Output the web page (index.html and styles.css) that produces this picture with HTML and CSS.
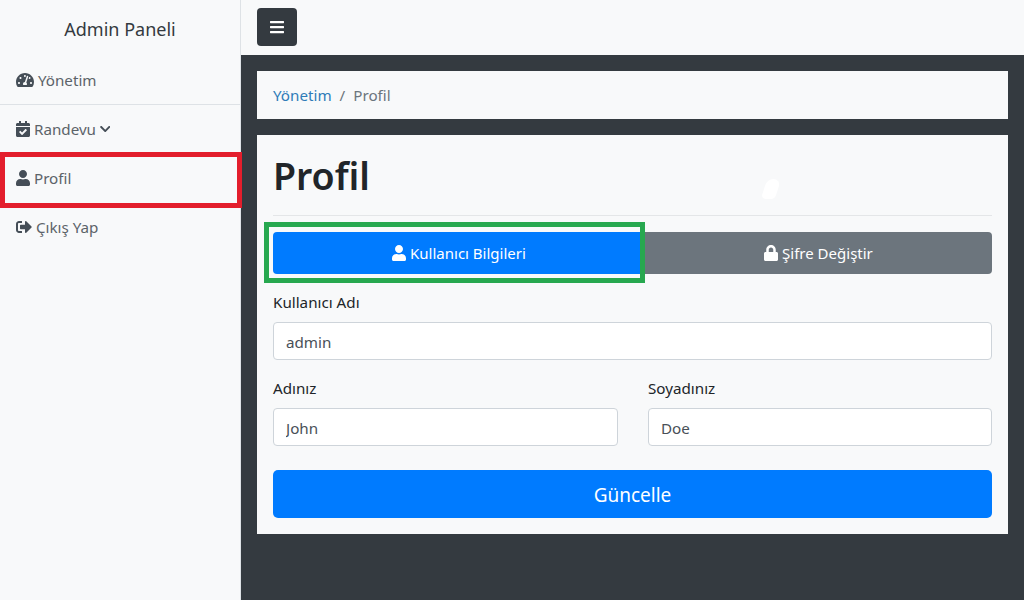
FILE: index.html
```html
<!DOCTYPE html>
<html lang="en">
<head>
    <meta charset="UTF-8">
    <meta name="viewport" content="width=device-width, initial-scale=1.0">
    <title>Admin Paneli</title>
    <link rel="stylesheet" href="styles.css">
</head>
<body>
    <div class="wrapper">
        <!-- Sidebar -->
        <nav class="sidebar">
            <div class="sidebar-header">Admin Paneli</div>
            <ul class="side-menu">
                <li class="side-item with-line">
                    <a href="#"><svg class="icon" viewBox="0 0 576 512"><path d="M288 32C128.94 32 0 160.94 0 320c0 52.8 14.25 102.26 39.06 144.8 5.61 9.62 16.3 15.2 27.44 15.2h443c11.14 0 21.83-5.58 27.44-15.2C561.75 422.26 576 372.8 576 320c0-159.06-128.94-288-288-288zm0 64c14.71 0 26.58 10.13 30.32 23.65-1.11 2.26-2.64 4.23-3.45 6.67l-9.22 27.67c-5.13 3.49-10.97 6.01-17.64 6.01-17.67 0-32-14.33-32-32S270.33 96 288 96zM96 384c-17.67 0-32-14.33-32-32s14.33-32 32-32 32 14.33 32 32-14.33 32-32 32zm48-160c-17.67 0-32-14.33-32-32s14.33-32 32-32 32 14.33 32 32-14.33 32-32 32zm246.77-72.41l-61.33 184C343.13 347.33 352 364.54 352 384c0 11.72-3.38 22.55-8.88 32H232.88c-5.5-9.45-8.88-20.28-8.88-32 0-33.94 26.5-61.43 59.9-63.59l61.34-184.01c4.17-12.56 17.73-19.45 30.36-15.17 12.57 4.19 19.35 17.79 15.17 30.36zm14.66 57.2l15.52-46.55c3.47-1.29 7.13-2.23 11.05-2.23 17.67 0 32 14.33 32 32s-14.33 32-32 32c-11.38-.01-20.89-6.28-26.57-15.22zM480 384c-17.67 0-32-14.33-32-32s14.33-32 32-32 32 14.33 32 32-14.33 32-32 32z"/></svg> Yönetim</a>
                </li>
                <li class="side-item">
                    <a href="#"><svg class="icon" viewBox="0 0 448 512"><path d="M436 160H12c-6.627 0-12-5.373-12-12v-36c0-26.51 21.49-48 48-48h48V12c0-6.627 5.373-12 12-12h40c6.627 0 12 5.373 12 12v52h128V12c0-6.627 5.373-12 12-12h40c6.627 0 12 5.373 12 12v52h48c26.51 0 48 21.49 48 48v36c0 6.627-5.373 12-12 12zM12 192h424c6.627 0 12 5.373 12 12v260c0 26.51-21.49 48-48 48H48c-26.51 0-48-21.49-48-48V204c0-6.627 5.373-12 12-12zm333.296 95.947l-28.169-28.398c-4.667-4.705-12.265-4.736-16.97-.068L194.12 364.665l-45.98-46.352c-4.667-4.705-12.266-4.736-16.971-.068l-28.397 28.17c-4.705 4.667-4.736 12.265-.068 16.97l82.601 83.269c4.667 4.705 12.265 4.736 16.97.068l142.953-141.805c4.705-4.667 4.736-12.265.068-16.97z"/></svg> Randevu <svg class="icon chevron" viewBox="0 0 448 512"><path d="M207.029 381.476L12.686 187.132c-9.373-9.373-9.373-24.569 0-33.941l22.667-22.667c9.357-9.357 24.522-9.375 33.901-.04L224 284.505l154.745-154.021c9.379-9.335 24.544-9.317 33.901.04l22.667 22.667c9.373 9.373 9.373 24.569 0 33.941L240.971 381.476c-9.373 9.372-24.569 9.372-33.942 0z"/></svg></a>
                </li>
                <li class="side-item">
                    <a href="#"><svg class="icon" viewBox="0 0 448 512"><path d="M224 256c70.7 0 128-57.3 128-128S294.7 0 224 0 96 57.3 96 128s57.3 128 128 128zm89.6 32h-16.7c-22.2 10.2-46.9 16-72.9 16s-50.6-5.8-72.9-16h-16.7C60.2 288 0 348.2 0 422.4V464c0 26.5 21.5 48 48 48h352c26.5 0 48-21.5 48-48v-41.6c0-74.2-60.2-134.4-134.4-134.4z"/></svg> Profil</a>
                </li>
                <li class="side-item">
                    <a href="#"><svg class="icon" viewBox="0 0 512 512"><path d="M497 273L329 441c-15 15-41 4.5-41-17v-96H152c-13.3 0-24-10.7-24-24v-96c0-13.3 10.7-24 24-24h136V88c0-21.4 25.9-32 41-17l168 168c9.3 9.4 9.3 24.6 0 34zM192 436v-40c0-6.6-5.4-12-12-12H96c-17.7 0-32-14.3-32-32V160c0-17.7 14.3-32 32-32h84c6.6 0 12-5.4 12-12V76c0-6.6-5.4-12-12-12H96c-53 0-96 43-96 96v192c0 53 43 96 96 96h84c6.6 0 12-5.4 12-12z"/></svg> Çıkış Yap</a>
                </li>
            </ul>
            <div class="mark-red"></div>
        </nav>

        <div class="content">
            <header class="topbar">
                <button class="toggle-btn"><svg class="icon" viewBox="0 0 448 512"><path d="M16 132h416c8.837 0 16-7.163 16-16V76c0-8.837-7.163-16-16-16H16C7.163 60 0 67.163 0 76v40c0 8.837 7.163 16 16 16zm0 160h416c8.837 0 16-7.163 16-16v-40c0-8.837-7.163-16-16-16H16c-8.837 0-16 7.163-16 16v40c0 8.837 7.163 16 16 16zm0 160h416c8.837 0 16-7.163 16-16v-40c0-8.837-7.163-16-16-16H16c-8.837 0-16 7.163-16 16v40c0 8.837 7.163 16 16 16z"/></svg></button>
            </header>

            <main class="main">
                <ol class="breadcrumb">
                    <li><a href="#">Yönetim</a></li>
                    <li class="sep">/</li>
                    <li class="current">Profil</li>
                </ol>

                <section class="card">
                    <h1>Profil</h1>
                    <div class="smudge"></div>
                    <hr>
                    <div class="tabs">
                        <button class="tab tab-user"><svg class="icon" viewBox="0 0 448 512"><path d="M224 256c70.7 0 128-57.3 128-128S294.7 0 224 0 96 57.3 96 128s57.3 128 128 128zm89.6 32h-16.7c-22.2 10.2-46.9 16-72.9 16s-50.6-5.8-72.9-16h-16.7C60.2 288 0 348.2 0 422.4V464c0 26.5 21.5 48 48 48h352c26.5 0 48-21.5 48-48v-41.6c0-74.2-60.2-134.4-134.4-134.4z"/></svg> Kullanıcı Bilgileri</button>
                        <button class="tab tab-pass"><svg class="icon" viewBox="0 0 448 512"><path d="M400 224h-24v-72C376 68.2 307.8 0 224 0S72 68.2 72 152v72H48c-26.5 0-48 21.5-48 48v192c0 26.5 21.5 48 48 48h352c26.5 0 48-21.5 48-48V272c0-26.5-21.5-48-48-48zm-104 0H152v-72c0-39.7 32.3-72 72-72s72 32.3 72 72v72z"/></svg> Şifre Değiştir</button>
                    </div>
                    <div class="mark-green"></div>

                    <form class="profile-form">
                        <div class="field">
                            <label>Kullanıcı Adı</label>
                            <input type="text" value="admin">
                        </div>
                        <div class="field-row">
                            <div class="field">
                                <label>Adınız</label>
                                <input type="text" value="John">
                            </div>
                            <div class="field">
                                <label>Soyadınız</label>
                                <input type="text" value="Doe">
                            </div>
                        </div>
                        <button type="button" class="save-btn">Güncelle</button>
                    </form>
                </section>
            </main>
        </div>
    </div>
</body>
</html>
```

FILE: styles.css
```css
* {
    margin: 0;
    padding: 0;
    box-sizing: border-box;
}

body {
    font-family: "Noto Sans", "Open Sans", sans-serif;
    font-size: 15.2px;
    background-color: #343a40;
    color: #212529;
    overflow: hidden;
}

a {
    text-decoration: none;
}

.icon {
    height: 16px;
    width: auto;
    fill: currentColor;
    vertical-align: -2px;
}

.wrapper {
    display: flex;
    height: 600px;
}

/* Sidebar */
.sidebar {
    position: relative;
    flex: 0 0 241px;
    background-color: #f8f9fa;
    border-right: 1px solid #dee2e6;
}

.sidebar-header {
    height: 56px;
    padding-top: 16px;
    font-size: 18px;
    line-height: 26px;
    text-align: center;
    color: #343a40;
}

.side-menu {
    list-style: none;
}

.side-item {
    height: 49px;
}

.side-item.with-line {
    border-bottom: 1px solid #dee2e6;
}

.side-item a {
    display: block;
    padding: 14px 16px 0;
    line-height: 20px;
    color: #5c6369;
}

.side-item .icon {
    color: #454e57;
}

.side-item .chevron {
    height: 12px;
    vertical-align: 0;
}

.mark-red {
    position: absolute;
    left: 0;
    top: 152px;
    width: 242px;
    height: 56px;
    border: 5px solid #e31e2c;
}

/* Top bar */
.content {
    flex: 1;
    display: flex;
    flex-direction: column;
}

.topbar {
    height: 55px;
    padding: 8px 16px;
    background-color: #f8f9fa;
}

.toggle-btn {
    display: flex;
    align-items: center;
    justify-content: center;
    width: 40px;
    height: 38px;
    border: none;
    border-radius: 4px;
    background-color: #343a40;
    color: #fff;
}

/* Main */
.main {
    flex: 1;
    padding: 16px;
    background-color: #343a40;
}

.breadcrumb {
    display: flex;
    gap: 8px;
    height: 48px;
    padding: 14px 16px;
    margin-bottom: 16px;
    list-style: none;
    line-height: 20px;
    background-color: #f8f9fa;
}

.breadcrumb a {
    color: #2f7cb8;
}

.breadcrumb .sep,
.breadcrumb .current {
    color: #6c757d;
}

.card {
    position: relative;
    height: 399px;
    padding: 16px;
    background-color: #f8f9fa;
}

.card h1 {
    height: 48px;
    font-size: 37.5px;
    font-weight: 600;
    line-height: 50px;
    color: #212529;
}

.smudge {
    position: absolute;
    left: 507px;
    top: 44px;
    width: 14px;
    height: 20px;
    border-radius: 6px 8px 4px 5px;
    background-color: #fff;
    transform: skewX(-18deg);
}

.card hr {
    margin: 16px 0;
    border: none;
    border-top: 1px solid #e4e6e8;
}

.tabs {
    display: flex;
    height: 42px;
}

.tab {
    font-family: inherit;
    font-size: 15px;
    border: none;
    color: #fff;
}

.tab-user {
    flex: 0 0 372px;
    background-color: #007bff;
    border-radius: 4px 0 0 4px;
}

.tab-pass {
    flex: 1;
    background-color: #6c757d;
    border-radius: 0 4px 4px 0;
}

.mark-green {
    position: absolute;
    left: 7px;
    top: 87px;
    width: 381px;
    height: 61px;
    border: 5px solid #27a84f;
}

/* Form */
.profile-form {
    margin-top: 16px;
}

.field {
    margin-bottom: 16px;
}

.field label {
    display: block;
    height: 32px;
    line-height: 24px;
    color: #212529;
}

.field input {
    display: block;
    width: 100%;
    height: 38px;
    padding: 2px 12px 0;
    font-family: inherit;
    font-size: 15.2px;
    color: #495057;
    background-color: #fff;
    border: 1px solid #ced4da;
    border-radius: 4px;
}

.field-row {
    display: grid;
    grid-template-columns: 345px 344px;
    gap: 30px;
}

.field-row .field {
    margin-bottom: 24px;
}

.save-btn {
    display: block;
    width: 100%;
    height: 48px;
    padding-top: 2px;
    font-family: inherit;
    font-size: 19px;
    color: #fff;
    background-color: #007bff;
    border: none;
    border-radius: 5px;
}
```
